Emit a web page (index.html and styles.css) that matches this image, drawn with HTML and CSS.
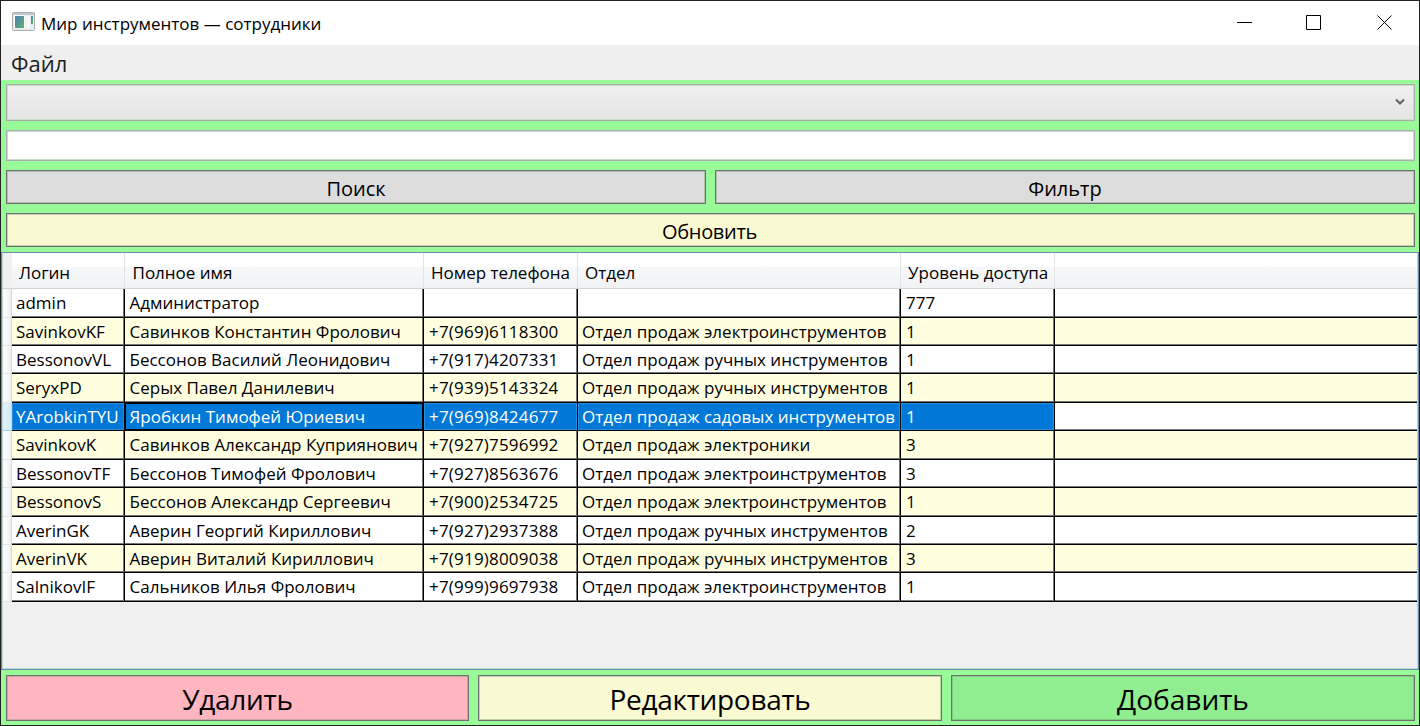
FILE: index.html
```html
<!DOCTYPE html>
<html lang="ru">
<head>
<meta charset="utf-8">
<title>Мир инструментов — сотрудники</title>
<link rel="stylesheet" href="styles.css">
</head>
<body>
<div class="window">
  <header class="titlebar">
    <svg class="app-icon" width="24" height="20" viewBox="0 0 24 20">
      <defs><linearGradient id="pane" x1="0" y1="0" x2="1" y2="1"><stop offset="0" stop-color="#4a7fb5"/><stop offset="1" stop-color="#5fb56c"/></linearGradient></defs>
      <rect x=".5" y=".5" width="22" height="18" rx="1" fill="#e9ebed" stroke="#a9aeb3"/>
      <path d="M1 2h21" stroke="#c3c8cd" stroke-width="2"/>
      <rect x="2" y="3" width="11" height="13" fill="#fff"/>
      <rect x="3" y="4" width="9" height="12" fill="url(#pane)"/>
      <rect x="14" y="4" width="4" height="12" fill="#f8f8f8"/>
      <rect x="19" y="4" width="2" height="8" fill="url(#pane)"/>
    </svg>
    <span class="title">Мир инструментов — сотрудники</span>
    <svg class="controls" width="160" height="20" viewBox="0 0 160 20" fill="none" stroke="#000" stroke-width="1">
      <path d="M0 9.500h15M69.500 2.500h14v14h-14zM140.500 2.500l14 14M154.500 2.500l-14 14"/>
    </svg>
  </header>
  <nav class="menu"><span>Файл</span></nav>
  <main class="content">
    <div class="field combo"><svg width="10" height="8" viewBox="0 0 10 8" fill="none" stroke="#606060" stroke-width="2"><path d="M1 1.500l4 4 4-4"/></svg></div>
    <div class="field input"></div>
    <div class="pair"><button class="btn gray">Поиск</button><button class="btn gray">Фильтр</button></div>
    <button class="btn cream refresh">Обновить</button>
    <section class="grid">
      <div class="row head"><i></i><b>Логин</b><b>Полное имя</b><b>Номер телефона</b><b>Отдел</b><b>Уровень доступа</b><b></b></div>
      <div class="row"><i></i><span>admin</span><span>Администратор</span><span></span><span></span><span>777</span></div>
      <div class="row"><i></i><span>SavinkovKF</span><span>Савинков Константин Фролович</span><span>+7(969)6118300</span><span>Отдел продаж электроинструментов</span><span>1</span></div>
      <div class="row"><i></i><span>BessonovVL</span><span>Бессонов Василий Леонидович</span><span>+7(917)4207331</span><span>Отдел продаж ручных инструментов</span><span>1</span></div>
      <div class="row"><i></i><span>SeryxPD</span><span>Серых Павел Данилевич</span><span>+7(939)5143324</span><span>Отдел продаж ручных инструментов</span><span>1</span></div>
      <div class="row selected"><i></i><span>YArobkinTYU</span><span class="current">Яробкин Тимофей Юриевич</span><span>+7(969)8424677</span><span>Отдел продаж садовых инструментов</span><span>1</span></div>
      <div class="row"><i></i><span>SavinkovK</span><span>Савинков Александр Куприянович</span><span>+7(927)7596992</span><span>Отдел продаж электроники</span><span>3</span></div>
      <div class="row"><i></i><span>BessonovTF</span><span>Бессонов Тимофей Фролович</span><span>+7(927)8563676</span><span>Отдел продаж электроинструментов</span><span>3</span></div>
      <div class="row"><i></i><span>BessonovS</span><span>Бессонов Александр Сергеевич</span><span>+7(900)2534725</span><span>Отдел продаж электроинструментов</span><span>1</span></div>
      <div class="row"><i></i><span>AverinGK</span><span>Аверин Георгий Кириллович</span><span>+7(927)2937388</span><span>Отдел продаж ручных инструментов</span><span>2</span></div>
      <div class="row"><i></i><span>AverinVK</span><span>Аверин Виталий Кириллович</span><span>+7(919)8009038</span><span>Отдел продаж ручных инструментов</span><span>3</span></div>
      <div class="row"><i></i><span>SalnikovIF</span><span>Сальников Илья Фролович</span><span>+7(999)9697938</span><span>Отдел продаж электроинструментов</span><span>1</span></div>
    </section>
    <footer class="actions"><button class="btn pink">Удалить</button><button class="btn cream">Редактировать</button><button class="btn green">Добавить</button></footer>
  </main>
</div>
</body>
</html>
```
FILE: styles.css
```css
* { box-sizing: border-box; }
body { margin: 0; font-family: "Open Sans", "Noto Sans", sans-serif; color: #000; overflow: hidden; }
.window { width: 1420px; height: 726px; border: 1px solid #222; display: flex; flex-direction: column; background: #98fb98; }
.titlebar { height: 44px; background: #fff; display: flex; align-items: center; padding-left: 11px; }
.app-icon { margin-top: -2px; }
.title { font-size: 17px; margin-left: 5px; line-height: 24px; padding-top: 2px; }
.controls { margin-left: auto; margin-right: 22px; }
.menu { height: 35px; background: #efefef; padding-left: 10px; font-size: 22px; line-height: 37px; color: #212121; }
.content { flex: 1; display: flex; flex-direction: column; padding: 4px 0 4px; }
.field { margin: 0 4px 0 5px; border: 1px solid #acacac; box-shadow: inset 0 0 0 1px #c8dcc8; }
.combo { height: 37px; background: linear-gradient(#f0f0f0, #e5e5e5); display: flex; justify-content: flex-end; align-items: center; padding: 0 9px 2px 0; }
.input { height: 31px; background: #fff; border-color: #abadb3; margin-top: 9px; }
.pair { display: grid; grid-template-columns: 1fr 1fr; gap: 9px; margin: 9px 4px 0 5px; }
.btn { font-family: inherit; font-size: 20px; letter-spacing: -.3px; line-height: 32px; padding: 4px 0 0; border: 1px solid #707070; border-radius: 0; height: 34px; color: #000; box-shadow: inset 0 0 0 1px rgba(112,145,112,.4); display: flex; align-items: center; justify-content: center; }
.gray { background: #ddd; letter-spacing: 0; }
.cream { background: #fafad2; }
.pink { background: #ffb6c1; }
.green { background: #90ee90; }
.refresh { margin: 9px 4px 0 5px; padding-right: 2px; }
.grid { margin: 5px 0 0; height: 418px; border: 1px solid #688caf; background: #f0f0f0; box-shadow: inset 0 0 0 1px #bdd8d3; font-size: 17px; padding: 0 1px; display: grid; grid-template-rows: 36px 29px 28px 28px 29px 28px 29px 28px 29px 28px 28px 29px; align-content: start; }
.row { display: grid; grid-template-columns: 9px 113px 299px 154px 323px 154px 1fr; line-height: 28px; white-space: nowrap; background: linear-gradient(#777 50%, #000 50%) 9px 100% / 100% 2px no-repeat, #fff; }
.row:nth-child(odd) { background-color: #ffffe0; }
.row i { background: linear-gradient(90deg, #fff, #f0f0f0); border-right: 1px solid #d5d5d5; border-bottom: 1px solid #e3e5e8; }
.row span { height: 100%; min-height: 0; overflow: hidden; border-right: 1px solid #000; border-bottom: 1px solid #000; box-shadow: inset -1px -1px 0 #777; padding-left: 4px; }
.row { grid-template-rows: 100%; }
.row span:nth-child(3) { padding-left: 4.5px; }
.row span:nth-child(4) { padding-left: 5px; letter-spacing: .2px; }
.row span:nth-child(6) { padding-left: 5px; }
.row.head { line-height: 35px; background: linear-gradient(#fff 0 40%, #f7f8fa 41%, #f1f2f4); border-bottom: 1px solid #d4d4d4; }
.row.head i { background: #f0f0f0; border: 0; }
.row b { font-weight: 400; padding: 2px 0 0 7px; border-right: 1px solid #e2e3e5; }
.row b:nth-child(3) { padding-left: 7.5px; }
.row b:last-child { border: 0; }
.row.selected span { background: #0078d7; color: #fff; box-shadow: inset 0 0 0 1px #2b8fdf; }
.row.selected { background-color: #fff; }
.row.selected .current { box-shadow: inset 0 0 0 1px #000; }
.row.selected i { background: linear-gradient(90deg, #e0f3fc, #d2ecf8); border-bottom-color: #8ed1ef; }
.actions { display: grid; grid-template-columns: 463px 464px 1fr; gap: 9px; margin: 5px 4px 0 5px; }
.actions .btn { height: 46px; font-size: 28px; padding-top: 1px; }
.actions .green { letter-spacing: 0; }
```
